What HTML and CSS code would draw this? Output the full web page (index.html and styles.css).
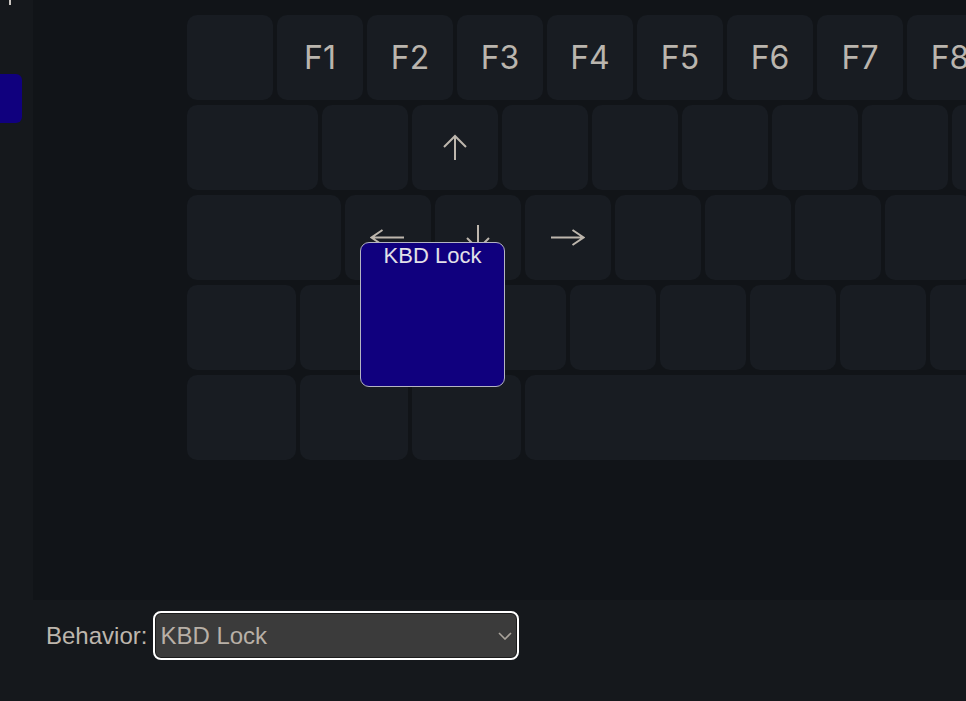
FILE: index.html
```html
<!DOCTYPE html>
<html lang="en">
<head>
<meta charset="utf-8">
<title>Keymap editor</title>
<link rel="stylesheet" href="styles.css">
</head>
<body>
<div class="app">
  <div class="workspace">
    <aside class="sidebar">
      <span class="tick"></span>
      <div class="layer-tab"></div>
    </aside>
    <main class="canvas">
      <div class="keyboard">
        <div class="row">
          <div class="key u1"></div>
          <div class="key u1">F1</div>
          <div class="key u1">F2</div>
          <div class="key u1">F3</div>
          <div class="key u1">F4</div>
          <div class="key u1">F5</div>
          <div class="key u1">F6</div>
          <div class="key u1">F7</div>
          <div class="key u1">F8</div>
          <div class="key u1">F9</div>
        </div>
        <div class="row">
          <div class="key u150"></div>
          <div class="key u1"></div>
          <div class="key u1" title="↑">
            <svg class="arrow-v" width="24" height="27" viewBox="0 0 24 27" aria-label="↑">
              <path d="M12 26 V2 M1 13 L12 2 L23 13" fill="none" stroke="#bdb6ad" stroke-width="2"/>
            </svg>
          </div>
          <div class="key u1"></div>
          <div class="key u1"></div>
          <div class="key u1"></div>
          <div class="key u1"></div>
          <div class="key u1"></div>
          <div class="key u1"></div>
        </div>
        <div class="row">
          <div class="key u175"></div>
          <div class="key u1" title="←">
            <svg class="arrow-h" width="35" height="17" viewBox="0 0 35 17" aria-label="←">
              <path d="M34 8.5 H1.5 M12.5 1 L1.5 8.5 L12.5 16" fill="none" stroke="#bdb6ad" stroke-width="2"/>
            </svg>
          </div>
          <div class="key u1" title="↓">
            <svg class="arrow-v" width="24" height="27" viewBox="0 0 24 27" aria-label="↓">
              <path d="M12 1 V25 M1 14 L12 25 L23 14" fill="none" stroke="#bdb6ad" stroke-width="2"/>
            </svg>
          </div>
          <div class="key u1" title="→">
            <svg class="arrow-h" width="35" height="17" viewBox="0 0 35 17" aria-label="→">
              <path d="M1 8.5 H33.5 M22.5 1 L33.5 8.5 L22.5 16" fill="none" stroke="#bdb6ad" stroke-width="2"/>
            </svg>
          </div>
          <div class="key u1"></div>
          <div class="key u1"></div>
          <div class="key u1"></div>
          <div class="key u1"></div>
          <div class="key u1"></div>
        </div>
        <div class="row">
          <div class="key u125"></div>
          <div class="key u2"></div>
          <div class="key u1"></div>
          <div class="key u1"></div>
          <div class="key u1"></div>
          <div class="key u1"></div>
          <div class="key u1"></div>
          <div class="key u1"></div>
          <div class="key u1"></div>
        </div>
        <div class="row">
          <div class="key u125"></div>
          <div class="key u125"></div>
          <div class="key u125"></div>
          <div class="key u625"></div>
        </div>
      </div>
      <div class="drag-key">KBD Lock</div>
    </main>
  </div>
  <footer class="controls">
    <label class="behavior-label" for="behavior">Behavior:</label>
    <div class="select-wrap">
      <select id="behavior" class="behavior-select">
        <option>KBD Lock</option>
      </select>
      <svg class="chevron" width="14" height="8" viewBox="0 0 14 8" aria-hidden="true">
        <path d="M1 1 L7 7 L13 1" fill="none" stroke="#a9a39b" stroke-width="1.6"/>
      </svg>
    </div>
  </footer>
</div>
</body>
</html>
```

FILE: styles.css
```css
html, body {
  margin: 0;
  padding: 0;
}
body {
  background: #15181c;
  width: 966px;
  height: 701px;
  overflow: hidden;
  font-family: "Liberation Sans", Arial, sans-serif;
}
.app {
  display: flex;
  flex-direction: column;
  height: 701px;
}
.workspace {
  display: flex;
  height: 600px;
  flex: none;
}
.sidebar {
  width: 33px;
  flex: none;
  background: #15181c;
  position: relative;
}
.tick {
  position: absolute;
  left: 9px;
  top: 0;
  width: 2px;
  height: 5px;
  background: #c9c5c0;
}
.layer-tab {
  margin-top: 74px;
  width: 22px;
  height: 49px;
  background: #10007e;
  border-radius: 0 6px 6px 0;
}
.canvas {
  flex: 1;
  background: #111418;
  overflow: hidden;
  position: relative;
}
.keyboard {
  display: flex;
  flex-direction: column;
  gap: 5px;
  padding: 15px 0 0 154px;
}
.row {
  display: flex;
  gap: 4px;
}
.key {
  flex: none;
  height: 85px;
  background: #181c22;
  border-radius: 10px;
  display: flex;
  align-items: center;
  justify-content: center;
  color: #bab5ae;
  font-family: Inter, "Noto Sans", sans-serif;
  font-size: 32px;
}
.u1 { width: 86px; }
.u125 { width: 108.5px; }
.u150 { width: 131px; }
.u175 { width: 153.5px; }
.u2 { width: 176px; }
.u625 { width: 558.5px; }
.arrow-v {
  display: block;
}
.arrow-h {
  display: block;
}
.drag-key {
  position: absolute;
  left: 327px;
  top: 242px;
  width: 143px;
  height: 143px;
  box-sizing: content-box;
  border: 1px solid #b4b4c2;
  border-radius: 9px;
  background: #10007e;
  color: #e2e0e8;
  font-family: "Liberation Sans", Arial, sans-serif;
  font-size: 22px;
  text-align: center;
  line-height: 25px;
}
.controls {
  flex: 1;
  display: flex;
  align-items: flex-start;
  gap: 8px;
  padding: 13px 0 0 46px;
}
.behavior-label {
  color: #bdb6ad;
  font-size: 24px;
  line-height: 45px;
}
.select-wrap {
  position: relative;
}
.behavior-select {
  appearance: none;
  -webkit-appearance: none;
  width: 362px;
  height: 45px;
  box-sizing: border-box;
  margin: 0;
  padding: 0 30px 0 4px;
  background: #3b3b3b;
  color: #b8b0a7;
  border: 1px solid #1c1c1c;
  outline: 2px solid #ffffff;
  border-radius: 6px;
  font-family: "Liberation Sans", Arial, sans-serif;
  font-size: 24px;
}
.chevron {
  position: absolute;
  right: 5px;
  top: 19px;
  pointer-events: none;
}
```
